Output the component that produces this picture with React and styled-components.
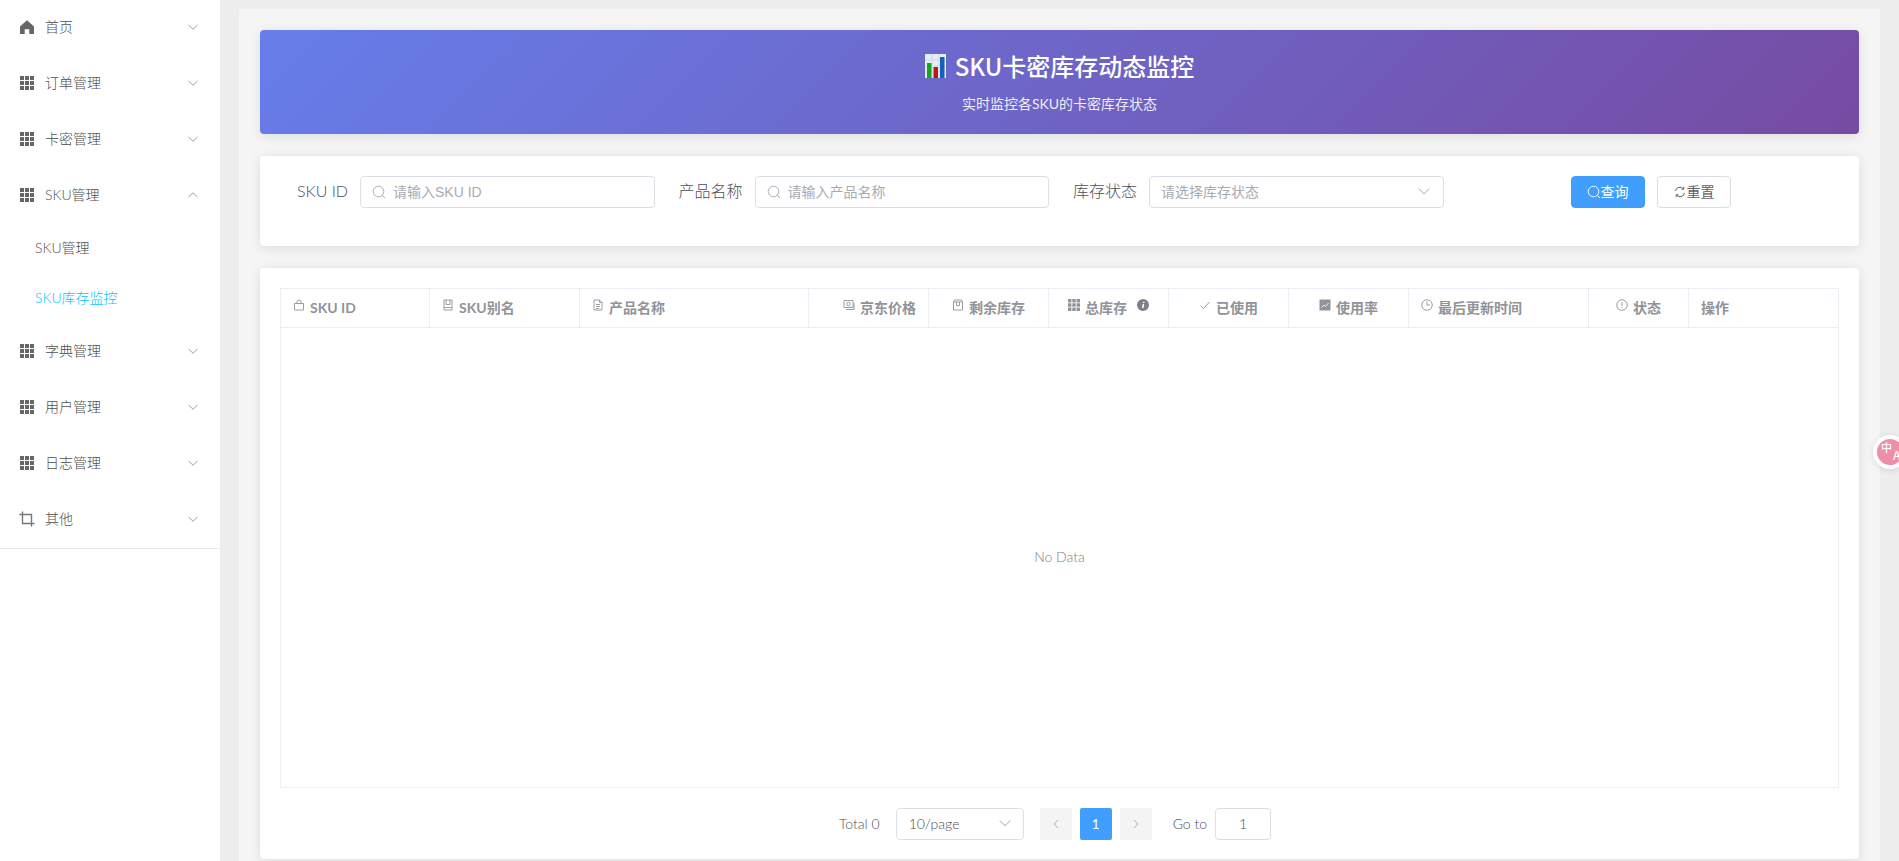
import React from "react";
import styled, { createGlobalStyle } from "styled-components";

const Global = createGlobalStyle`
  html, body { margin: 0; padding: 0; height: 100%; overflow: hidden; background: #ededed; }
  #root { height: 100%; }
  * { box-sizing: border-box; }
  body { font-family: Lato, "Noto Sans CJK SC", sans-serif; font-size: 14px; font-weight: 300; color: #4c4e54; }
`;

const Page = styled.div`
  display: flex;
  height: 861px;
  overflow: hidden;
  position: relative;
`;

const Sidebar = styled.aside`
  flex: 0 0 219px;
  background: #fff;
`;

const Menu = styled.nav`
  margin-top: -1px;
  height: 550px;
  border-bottom: 1px solid #e9e9ec;
  width: 220px;
`;

const MenuRow = styled.div`
  display: flex;
  align-items: center;
  height: ${(p) => (p.$sub ? 50 : 56)}px;
  padding-left: ${(p) => (p.$sub ? 35 : 20)}px;
  padding-right: 22px;
  color: ${(p) => (p.$active ? "#00c4ff" : "#4f4f4f")};
  font-size: 14px;
`;

const MenuIcon = styled.span`
  display: flex;
  width: 14px;
  margin-right: 11px;
  color: #666;
`;

const MenuLabel = styled.span`
  flex: 1;
  margin-bottom: 2px;
`;

const Main = styled.main`
  flex: 1;
  padding: 9px 19px 0 19px;
  min-width: 0;
`;

const Panel = styled.div`
  background: #f5f5f5;
  padding: 21px;
  height: 900px;
`;

const Card = styled.section`
  background: #fff;
  border-radius: 4px;
  box-shadow: 0 2px 12px rgba(0, 0, 0, 0.1);
  margin-bottom: 22px;
`;

const Banner = styled(Card)`
  height: 104px;
  padding: 20px;
  text-align: center;
  color: #fff;
  background: linear-gradient(135deg, #667eea 0%, #764ba2 100%);
`;

const Title = styled.h2`
  margin: -1px 0 11px;
  font-size: 24px;
  line-height: 34px;
  font-weight: 500;
  display: flex;
  justify-content: center;
  align-items: center;
  gap: 9px;
  font-family: "Noto Sans CJK SC", sans-serif;
`;

const Subtitle = styled.p`
  margin: 0;
  font-size: 14px;
  line-height: 20px;
  font-weight: 400;
  opacity: 0.88;
`;

const FilterCard = styled(Card)`
  height: 90px;
  padding: 20px;
  display: flex;
  align-items: flex-start;
  gap: 20px;
`;

const Field = styled.div`
  display: flex;
  align-items: center;
  flex: 0 0 374.5px;
`;

const FieldLabel = styled.label`
  flex: 0 0 80px;
  height: 32px;
  padding-right: 12px;
  text-align: right;
  font-size: 16px;
  line-height: 30px;
  color: #4c4e54;
  white-space: nowrap;
`;

const InputBox = styled.div`
  flex: 1;
  display: flex;
  align-items: center;
  height: 32px;
  padding: 0 13px 2px 11px;
  border: 1px solid #dcdfe6;
  border-radius: 4px;
  color: #a8abb2;
  font-family: "Liberation Sans", "Noto Sans CJK SC", sans-serif;
  font-size: 14px;
  font-weight: 400;
  gap: 7px;
`;

const Grow = styled.span`
  flex: 1;
`;

const ButtonGroup = styled.div`
  display: flex;
  gap: 12px;
  margin-left: 107px;
`;

const Button = styled.button`
  display: flex;
  align-items: center;
  justify-content: center;
  width: 74px;
  height: 32px;
  padding: 0 0 2px;
  border-radius: 4px;
  border: 1px solid ${(p) => (p.$primary ? "#409eff" : "#dcdfe6")};
  background: ${(p) => (p.$primary ? "#409eff" : "#fff")};
  color: ${(p) => (p.$primary ? "#fff" : "#606266")};
  font: 14px "Noto Sans CJK SC", sans-serif;
`;

const TableCard = styled(Card)`
  height: 592px;
  padding: 20px;
  border-bottom: 1px solid #e4e7ed;
  margin-bottom: 0;
`;

const Table = styled.div`
  height: 500px;
  border: 1px solid #ebeef5;
  display: flex;
  flex-direction: column;
`;

const HeadRow = styled.div`
  display: grid;
  grid-template-columns: 149px 150px 229px 120px 120px 120px 120px 120px 180px 100px 1fr;
  height: 39px;
  border-bottom: 1px solid #ebeef5;
  flex: none;
`;

const HeadCell = styled.div`
  display: flex;
  align-items: center;
  justify-content: ${(p) => p.$align || "flex-start"};
  padding: 0 12px 2px;
  border-right: 1px solid #ebeef5;
  color: #909399;
  font-weight: 700;
  font-size: 14px;
  gap: 5px;
  white-space: nowrap;
  &:last-child { border-right: 0; }
`;

const HeadIcon = styled.span`
  display: flex;
  width: 12px;
  height: 12px;
  flex: none;
  margin-top: -5px;
  color: #909399;
`;

const InfoIcon = styled(HeadIcon)`
  margin-left: 5px;
`;

const Empty = styled.div`
  flex: 1;
  display: flex;
  align-items: center;
  justify-content: center;
  padding-bottom: 2px;
  color: #7d8087;
  font-size: 14px;
`;

const Pager = styled.div`
  display: flex;
  align-items: center;
  justify-content: center;
  margin-top: 20px;
  padding-right: 9px;
  height: 32px;
  font-size: 14px;
  color: #4c4e54;
`;

const PagerText = styled.span`
  margin-bottom: 2px;
`;

const PagerSelect = styled.div`
  display: flex;
  align-items: center;
  justify-content: space-between;
  width: 128px;
  height: 32px;
  margin: 0 16px;
  padding: 0 12px 2px 12px;
  border: 1px solid #dcdfe6;
  border-radius: 4px;
`;

const PageBtn = styled.div`
  display: flex;
  align-items: center;
  justify-content: center;
  width: 32px;
  height: 32px;
  margin-right: ${(p) => (p.$last ? 21 : 8)}px;
  padding-bottom: ${(p) => (p.$active ? 2 : 0)}px;
  border-radius: 2px;
  background: ${(p) => (p.$active ? "#409eff" : "#f4f4f5")};
  color: ${(p) => (p.$active ? "#fff" : "#a8abb2")};
  font-weight: 400;
`;

const GotoInput = styled.div`
  display: flex;
  align-items: center;
  justify-content: center;
  width: 56px;
  height: 32px;
  margin-left: 8px;
  padding-bottom: 2px;
  border: 1px solid #dcdfe6;
  border-radius: 4px;
`;

const Translate = styled.div`
  position: absolute;
  left: 1873px;
  top: 435px;
  width: 34px;
  height: 34px;
  border-radius: 50%;
  background: #fff;
  box-shadow: 0 1px 6px rgba(0, 0, 0, 0.12);
  display: flex;
  align-items: center;
  justify-content: center;
`;

const TranslateInner = styled.div`
  width: 26px;
  height: 26px;
  border-radius: 50%;
  background: #ee8fa9;
  color: #fff;
  font: 500 11px/11px "Noto Sans CJK SC", sans-serif;
  white-space: nowrap;
  display: flex;
  gap: 1px;
  padding: 3px 0 0 4px;
`;

const TranslateLatin = styled.span`
  margin-top: 7px;
  font-size: 12px;
`;

const Chevron = ({ up, w = 10, color = "#909399" }) => (
  <svg width={w} height={w} viewBox="0 0 10 10" fill="none" stroke={color} strokeWidth="0.9" style={{ flex: "none" }}>
    <path d={up ? "M0.5 7L5 2.8L9.5 7" : "M0.5 3L5 7.2L9.5 3"} />
  </svg>
);

const Grid = ({ s = 14 }) => (
  <svg width={s} height={s} viewBox="0 0 14 14" fill="currentColor">
    {[0, 5, 10].map((y) =>
      [0, 5, 10].map((x) => <rect key={`${x}-${y}`} x={x} y={y} width="4" height="4" />)
    )}
  </svg>
);

const Home = () => (
  <svg width="14" height="14" viewBox="0 0 14 14" fill="currentColor">
    <path d="M7 0.3L14 6.4V14H9.3V9.2H4.7V14H0V6.4Z" />
  </svg>
);

const Crop = () => (
  <svg width="16" height="16" viewBox="0 0 16 16" fill="none" stroke="#777" strokeWidth="1.4" style={{ marginLeft: -1, flex: "none" }}>
    <path d="M3.5 0.5V12.5H15.5M12.5 15.5V3.5H0.5" />
  </svg>
);

const Search = ({ s = 14 }) => (
  <svg width={s} height={s} viewBox="0 0 14 14" fill="none" stroke="currentColor" strokeWidth="1" style={{ flex: "none", marginTop: 2 }}>
    <circle cx="6.5" cy="6.5" r="5.3" />
    <path d="M10.4 10.4L13 13" />
  </svg>
);

const Refresh = () => (
  <svg width="14" height="14" viewBox="0 0 14 14" fill="none" stroke="currentColor" strokeWidth="1" style={{ marginTop: 2 }}>
    <path d="M2.5 6a4.5 4.5 0 0 1 8-2M11.5 8a4.5 4.5 0 0 1-8 2" />
    <path d="M10.8 1.8v2.4H8.4M3.2 12.2V9.8h2.4" />
  </svg>
);

const Line = ({ d, children }) => (
  <svg width="12" height="12" viewBox="0 0 24 24" fill="none" stroke="currentColor" strokeWidth="1.8">
    {d && <path d={d} />}
    {children}
  </svg>
);

const icons = {
  bag: <Line d="M3 9h18v13H3zM8 9V6a4 4 0 0 1 8 0v3" />,
  book: <Line d="M4 2h16v20H4zM8 2v9h8V2M4 17h16" />,
  doc: <Line d="M4 2h11l5 5v15H4zM15 2v5h5M8 11h8M8 15h8M8 19h6" />,
  money: (
    <Line d="M2 3h18v14H2zM6 21h16V8">
      <circle cx="11" cy="10" r="3.5" />
    </Line>
  ),
  box: <Line d="M3 6h18v16H3zM3 6l2-4h14l2 4M9 6v7h6V6" />,
  grid: <Grid s={12} />,
  check: <Line d="M3 13l6 6L21 6" />,
  chart: (
    <svg width="12" height="12" viewBox="0 0 24 24">
      <rect x="1" y="1" width="22" height="22" fill="currentColor" />
      <path d="M5 17l5-5 3 3 6-7" fill="none" stroke="#fff" strokeWidth="1.8" />
    </svg>
  ),
  clock: (
    <Line d="M12 5v7h6">
      <circle cx="12" cy="12" r="10.5" />
    </Line>
  ),
  warn: (
    <Line d="M12 6v8M12 16.5v2">
      <circle cx="12" cy="12" r="10.5" />
    </Line>
  ),
};

const Info = () => (
  <svg width="12" height="12" viewBox="0 0 24 24">
    <circle cx="12" cy="12" r="12" fill="#7d8087" />
    <path d="M13 10l-1.6 8M13.6 5.5v2.4" stroke="#fff" strokeWidth="3" fill="none" />
  </svg>
);

const ChartEmoji = () => (
  <svg width="21" height="24" viewBox="0 0 21 24" style={{ flex: "none" }}>
    <rect width="21" height="24" fill="#e6edf3" />
    <path d="M0 6h21M0 12h21M0 18h21M7 0v24M14 0v24" stroke="#c6d2dc" strokeWidth="0.6" />
    <rect x="2" y="9" width="4.5" height="15" fill="#13a61e" />
    <rect x="8.5" y="13" width="4.5" height="11" fill="#c41414" />
    <rect x="15" y="3" width="4.5" height="21" fill="#1560bd" />
  </svg>
);

const menu = [
  { t: "首页", i: <Home /> },
  { t: "订单管理", i: <Grid /> },
  { t: "卡密管理", i: <Grid /> },
  { t: "SKU管理", i: <Grid />, open: true },
  { t: "SKU管理", sub: true },
  { t: "SKU库存监控", sub: true, active: true },
  { t: "字典管理", i: <Grid /> },
  { t: "用户管理", i: <Grid /> },
  { t: "日志管理", i: <Grid /> },
  { t: "其他", i: <Crop /> },
];

const cols = [
  { t: "SKU ID", i: "bag" },
  { t: "SKU别名", i: "book" },
  { t: "产品名称", i: "doc" },
  { t: "京东价格", i: "money", a: "flex-end" },
  { t: "剩余库存", i: "box", a: "center" },
  { t: "总库存", i: "grid", a: "center", info: true },
  { t: "已使用", i: "check", a: "center" },
  { t: "使用率", i: "chart", a: "center" },
  { t: "最后更新时间", i: "clock" },
  { t: "状态", i: "warn", a: "center" },
  { t: "操作" },
];

export default function App() {
  return (
    <Page>
      <Global />
      <Sidebar>
        <Menu>
          {menu.map((m, k) => (
            <MenuRow key={k} $sub={m.sub} $active={m.active}>
              {m.i && <MenuIcon>{m.i}</MenuIcon>}
              <MenuLabel>{m.t}</MenuLabel>
              {!m.sub && <Chevron up={m.open} />}
            </MenuRow>
          ))}
        </Menu>
      </Sidebar>
      <Main>
        <Panel>
          <Banner as="header">
            <Title>
              <ChartEmoji />
              SKU卡密库存动态监控
            </Title>
            <Subtitle>实时监控各SKU的卡密库存状态</Subtitle>
          </Banner>
          <FilterCard>
            <Field>
              <FieldLabel>SKU ID</FieldLabel>
              <InputBox>
                <Search />
                请输入SKU ID
              </InputBox>
            </Field>
            <Field>
              <FieldLabel>产品名称</FieldLabel>
              <InputBox>
                <Search />
                请输入产品名称
              </InputBox>
            </Field>
            <Field>
              <FieldLabel>库存状态</FieldLabel>
              <InputBox>
                <Grow>请选择库存状态</Grow>
                <Chevron color="#c0c4cc" w={12} />
              </InputBox>
            </Field>
            <ButtonGroup>
              <Button $primary>
                <Search />
                查询
              </Button>
              <Button>
                <Refresh />
                重置
              </Button>
            </ButtonGroup>
          </FilterCard>
          <TableCard>
            <Table>
              <HeadRow>
                {cols.map((c) => (
                  <HeadCell key={c.t} $align={c.a}>
                    {c.i && <HeadIcon>{icons[c.i]}</HeadIcon>}
                    {c.t}
                    {c.info && (
                      <InfoIcon>
                        <Info />
                      </InfoIcon>
                    )}
                  </HeadCell>
                ))}
              </HeadRow>
              <Empty>No Data</Empty>
            </Table>
            <Pager>
              <PagerText>Total 0</PagerText>
              <PagerSelect>
                10/page
                <Chevron color="#c0c4cc" w={12} />
              </PagerSelect>
              <PageBtn>
                <svg width="10" height="10" viewBox="0 0 10 10" fill="none" stroke="#a8abb2" strokeWidth="1"><path d="M7 1L3 5l4 4" /></svg>
              </PageBtn>
              <PageBtn $active>1</PageBtn>
              <PageBtn $last>
                <svg width="10" height="10" viewBox="0 0 10 10" fill="none" stroke="#a8abb2" strokeWidth="1"><path d="M3 1l4 4-4 4" /></svg>
              </PageBtn>
              <PagerText>Go to</PagerText>
              <GotoInput>1</GotoInput>
            </Pager>
          </TableCard>
        </Panel>
      </Main>
      <Translate>
        <TranslateInner>
          中<TranslateLatin>A</TranslateLatin>
        </TranslateInner>
      </Translate>
    </Page>
  );
}
